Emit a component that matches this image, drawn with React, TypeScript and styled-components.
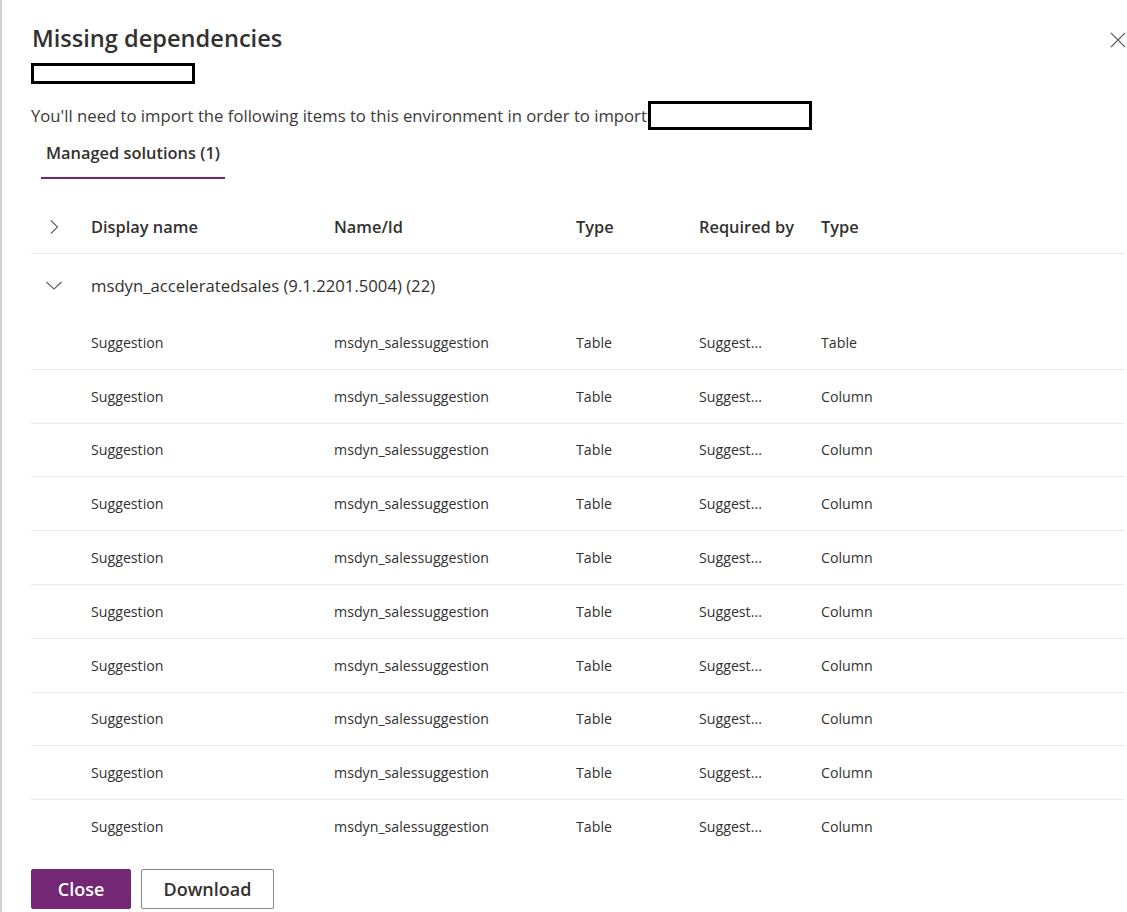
import React from 'react';
import styled, { createGlobalStyle } from 'styled-components';

const GlobalStyle = createGlobalStyle`
  html, body {
    margin: 0;
    padding: 0;
    background: #ffffff;
  }
  body {
    font-family: "Open Sans", "Noto Sans", sans-serif;
    color: #323130;
  }
`;

type Dep = {
  display: string;
  name: string;
  type: string;
  requiredBy: string;
  reqType: string;
};

const rows: Dep[] = [
  { display: 'Suggestion', name: 'msdyn_salessuggestion', type: 'Table', requiredBy: 'Suggest...', reqType: 'Table' },
  ...Array.from({ length: 9 }, () => ({
    display: 'Suggestion',
    name: 'msdyn_salessuggestion',
    type: 'Table',
    requiredBy: 'Suggest...',
    reqType: 'Column',
  })),
];

const ChevronRight = () => (
  <svg width="16" height="16" viewBox="0 0 16 16" fill="none">
    <path d="M5 1.5 L11.5 8 L5 14.5" stroke="#605e5c" strokeWidth="1.1" />
  </svg>
);

const ChevronDown = () => (
  <svg width="18" height="12" viewBox="0 0 18 12" fill="none">
    <path d="M1.5 3 L9 10 L16.5 3" stroke="#605e5c" strokeWidth="1.1" />
  </svg>
);

const CloseIcon = () => (
  <svg width="16" height="16" viewBox="0 0 16 16" fill="none">
    <path d="M1 1 L15 15 M15 1 L1 15" stroke="#605e5c" strokeWidth="1.1" />
  </svg>
);

const App: React.FC = () => {
  return (
    <Page>
      <GlobalStyle />
      <TitleBar>
        <Title>Missing dependencies</Title>
        <CloseButton aria-label="Close">
          <CloseIcon />
        </CloseButton>
      </TitleBar>
      <SubtitleBox />
      <Description>
        You'll need to import the following items to this environment in order to import
        <InlineBox />
      </Description>

      <Tabs>
        <Tab>Managed solutions (1)</Tab>
      </Tabs>

      <Table>
        <HeaderRow>
          <ChevronCell>
            <ChevronRight />
          </ChevronCell>
          <HeadCell>Display name</HeadCell>
          <HeadCell>Name/Id</HeadCell>
          <HeadCell>Type</HeadCell>
          <HeadCell>Required by</HeadCell>
          <HeadCell>Type</HeadCell>
        </HeaderRow>

        <GroupRow>
          <ChevronCell>
            <ChevronDown />
          </ChevronCell>
          <GroupTitle>msdyn_acceleratedsales (9.1.2201.5004) (22)</GroupTitle>
        </GroupRow>

        {rows.map((r, i) => (
          <DataRow key={i} $last={i === rows.length - 1}>
            <span />
            <Cell>{r.display}</Cell>
            <Cell>{r.name}</Cell>
            <Cell>{r.type}</Cell>
            <Cell>{r.requiredBy}</Cell>
            <Cell>{r.reqType}</Cell>
          </DataRow>
        ))}
      </Table>

      <Footer>
        <PrimaryButton>Close</PrimaryButton>
        <DefaultButton>Download</DefaultButton>
      </Footer>
    </Page>
  );
};

export default App;

const Page = styled.div`
  box-sizing: border-box;
  height: 912px;
  padding: 22px 2px 0 29px;
  border-left: 2px solid #d2d0ce;
  overflow: hidden;
`;

const TitleBar = styled.div`
  display: flex;
  align-items: center;
  justify-content: space-between;
  height: 32px;
`;

const Title = styled.h1`
  margin: 0 0 0 1px;
  font-size: 23.6px;
  line-height: 32px;
  font-weight: 600;
  color: #323130;
`;

const CloseButton = styled.button`
  display: flex;
  align-items: center;
  justify-content: center;
  width: 16px;
  height: 16px;
  margin: 4px -1px 0 0;
  padding: 0;
  border: none;
  background: transparent;
  cursor: pointer;
`;

// black-outlined blanks standing in for the redacted names
const SubtitleBox = styled.div`
  box-sizing: border-box;
  width: 164px;
  height: 21px;
  margin-top: 9px;
  border: 3px solid #000000;
  background: #ffffff;
`;

const InlineBox = styled.span`
  display: inline-block;
  box-sizing: border-box;
  width: 164px;
  height: 29px;
  margin-left: 1px;
  border: 3px solid #000000;
  background: #ffffff;
`;

const Description = styled.div`
  display: flex;
  align-items: center;
  margin-top: 17px;
  font-size: 16.7px;
  line-height: 22px;
  color: #3b3a39;
  white-space: nowrap;
`;

const Tabs = styled.div`
  display: flex;
  margin-left: 10px;
`;

const Tab = styled.div`
  margin-top: 12px;
  padding: 0 5px 13px;
  font-size: 16.4px;
  line-height: 22px;
  font-weight: 600;
  color: #323130;
  border-bottom: 2px solid #742774;
`;

const Table = styled.div`
  margin-top: 21px;
`;

const columns = '60px 243px 242px 123px 122px 1fr';

const HeaderRow = styled.div`
  display: grid;
  grid-template-columns: ${columns};
  align-items: center;
  height: 53px;
  border-bottom: 1px solid #edebe9;
`;

const ChevronCell = styled.div`
  display: flex;
  align-items: center;
  justify-content: center;
  width: 46px;
`;

const HeadCell = styled.div`
  font-size: 16.4px;
  font-weight: 600;
  color: #323130;
`;

const GroupRow = styled.div`
  display: grid;
  grid-template-columns: 60px 1fr;
  align-items: center;
  height: 62px;
`;

const GroupTitle = styled.div`
  font-size: 16.7px;
  font-weight: 500;
  color: #323130;
`;

const DataRow = styled.div<{ $last?: boolean }>`
  display: grid;
  grid-template-columns: ${columns};
  align-items: center;
  height: 52.8px;
  border-bottom: 1px solid ${(p) => (p.$last ? 'transparent' : '#edebe9')};
`;

const Cell = styled.div`
  font-size: 14.2px;
  color: #323130;
  white-space: nowrap;
  overflow: hidden;
`;

const Footer = styled.div`
  display: flex;
  gap: 10px;
  margin-top: 15px;
`;

const BaseButton = styled.button`
  box-sizing: border-box;
  height: 40px;
  padding: 0 20px;
  border-radius: 2px;
  font-family: "Open Sans", "Noto Sans", sans-serif;
  font-size: 18px;
  font-weight: 600;
  cursor: pointer;
`;

const PrimaryButton = styled(BaseButton)`
  width: 100px;
  background: #742774;
  border: 1px solid #742774;
  color: #ffffff;
`;

const DefaultButton = styled(BaseButton)`
  width: 133px;
  background: #ffffff;
  border: 1px solid #8a8886;
  color: #323130;
`;
